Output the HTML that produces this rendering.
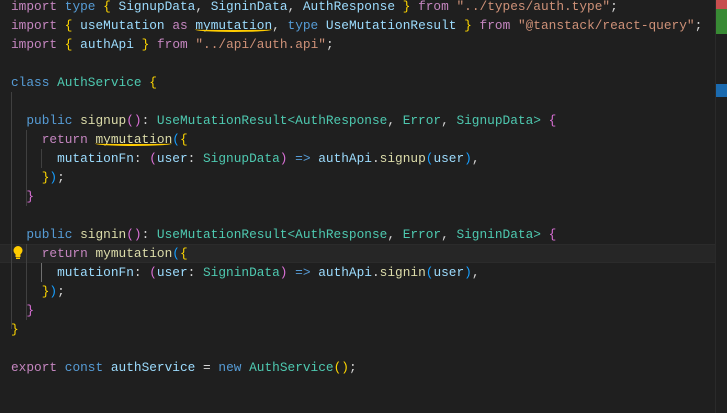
<!DOCTYPE html>
<html><head><style>
body{margin:0;width:727px;height:413px;background:#1f1f1f;overflow:hidden;position:relative;font-family:"Liberation Mono",monospace;font-size:12.8px;}
.code{position:absolute;left:11px;top:-3px;}
.l{height:19px;line-height:19px;white-space:pre;color:#d4d4d4;}
.k{color:#c586c0}.b{color:#569cd6}.v{color:#9cdcfe}.t{color:#4ec9b0}.f{color:#dcdcaa}.s{color:#ce9178}
.y{color:#ffd700}.p{color:#da70d6}.c{color:#179fff}
.u{position:relative}
.u:after{content:"";position:absolute;left:0;right:0;bottom:1px;height:3px;border-bottom:2px solid #ffcc00;border-radius:0 0 50% 50%;}
.g{position:absolute;width:1px;background:#404040;}
</style></head><body>
<div style="position:absolute;left:0;top:244px;width:715px;height:19px;background:#262626;border-top:1px solid #2b2b2b;border-bottom:1px solid #2b2b2b;box-sizing:border-box"></div>
<div class="g" style="left:11px;top:92px;height:237px"></div>
<div class="g" style="left:26px;top:130px;height:76px"></div>
<div class="g" style="left:26px;top:244px;height:76px"></div>
<div class="g" style="left:41px;top:149px;height:19px"></div>
<div class="g" style="left:41px;top:263px;height:19px;background:#707070"></div>
<div class="code">
<div class="l"><span class="k">import</span> <span class="b">type</span> <span class="y">{</span> <span class="v">SignupData</span>, <span class="v">SigninData</span>, <span class="v">AuthResponse</span> <span class="y">}</span> <span class="k">from</span> <span class="s">"../types/auth.type"</span>;</div>
<div class="l"><span class="k">import</span> <span class="y">{</span> <span class="v">useMutation</span> <span class="k">as</span> <span class="v u">mymutation</span>, <span class="b">type</span> <span class="v">UseMutationResult</span> <span class="y">}</span> <span class="k">from</span> <span class="s">"@tanstack/react-query"</span>;</div>
<div class="l"><span class="k">import</span> <span class="y">{</span> <span class="v">authApi</span> <span class="y">}</span> <span class="k">from</span> <span class="s">"../api/auth.api"</span>;</div>
<div class="l"> </div>
<div class="l"><span class="b">class</span> <span class="t">AuthService</span> <span class="y">{</span></div>
<div class="l"> </div>
<div class="l">  <span class="b">public</span> <span class="f">signup</span><span class="p">()</span>: <span class="t">UseMutationResult</span><span class="t">&lt;AuthResponse</span>, <span class="t">Error</span>, <span class="t">SignupData&gt;</span> <span class="p">{</span></div>
<div class="l">    <span class="k">return</span> <span class="f"><span class="u">mymutation</span></span><span class="c">(</span><span class="y">{</span></div>
<div class="l">      <span class="v">mutationFn</span>: <span class="p">(</span><span class="v">user</span>: <span class="t">SignupData</span><span class="p">)</span> <span class="b">=&gt;</span> <span class="v">authApi</span>.<span class="f">signup</span><span class="c">(</span><span class="v">user</span><span class="c">)</span>,</div>
<div class="l">    <span class="y">}</span><span class="c">)</span>;</div>
<div class="l">  <span class="p">}</span></div>
<div class="l"> </div>
<div class="l">  <span class="b">public</span> <span class="f">signin</span><span class="p">()</span>: <span class="t">UseMutationResult</span><span class="t">&lt;AuthResponse</span>, <span class="t">Error</span>, <span class="t">SigninData&gt;</span> <span class="p">{</span></div>
<div class="l">    <span class="k">return</span> <span class="f">mymutation</span><span class="c">(</span><span class="y">{</span></div>
<div class="l">      <span class="v">mutationFn</span>: <span class="p">(</span><span class="v">user</span>: <span class="t">SigninData</span><span class="p">)</span> <span class="b">=&gt;</span> <span class="v">authApi</span>.<span class="f">signin</span><span class="c">(</span><span class="v">user</span><span class="c">)</span>,</div>
<div class="l">    <span class="y">}</span><span class="c">)</span>;</div>
<div class="l">  <span class="p">}</span></div>
<div class="l"><span class="y">}</span></div>
<div class="l"> </div>
<div class="l"><span class="k">export</span> <span class="b">const</span> <span class="v">authService</span> = <span class="b">new</span> <span class="t">AuthService</span><span class="y">()</span>;</div>
</div>
<svg style="position:absolute;left:12px;top:245px" width="12" height="16" viewBox="0 0 12 16"><circle cx="6" cy="5.5" r="4.5" fill="#ffcc00"/><rect x="3.5" y="9" width="5" height="3" fill="#ffcc00"/><rect x="4" y="12.5" width="4" height="1.5" fill="#ffcc00"/></svg>
<div style="position:absolute;left:715px;top:0;width:12px;height:413px;background:#1f1f1f;border-left:1px solid #2a2a2a"></div>
<div style="position:absolute;left:716px;top:0;width:11px;height:9px;background:#c74e4e"></div>
<div style="position:absolute;left:716px;top:9px;width:11px;height:25px;background:#388a34"></div>
<div style="position:absolute;left:716px;top:84px;width:11px;height:13px;background:#1b6bb0"></div>
</body></html>
